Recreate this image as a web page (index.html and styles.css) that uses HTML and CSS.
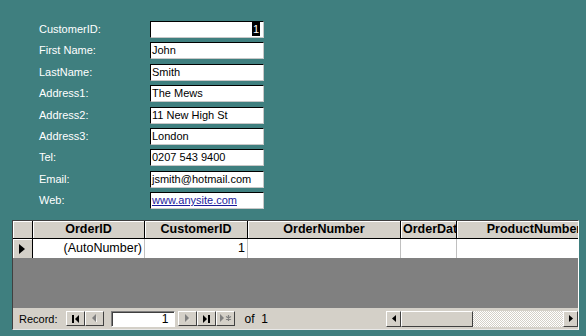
FILE: index.html
```html
<!DOCTYPE html>
<html lang="en">
<head>
  <meta charset="UTF-8">
  <title>Customers</title>
  <link rel="stylesheet" href="styles.css">
</head>
<body>
<!--顾客表单-->
<div class="form">
  <div class="lbl">CustomerID:</div><div class="box num"><span class="hilite">1</span></div>
  <div class="lbl">First Name:</div><div class="box">John</div>
  <div class="lbl">LastName:</div><div class="box">Smith</div>
  <div class="lbl">Address1:</div><div class="box">The Mews</div>
  <div class="lbl">Address2:</div><div class="box">11 New High St</div>
  <div class="lbl">Address3:</div><div class="box">London</div>
  <div class="lbl">Tel:</div><div class="box">0207 543 9400</div>
  <div class="lbl">Email:</div><div class="box">jsmith@hotmail.com</div>
  <div class="lbl">Web:</div><div class="box"><a href="#">www.anysite.com</a></div>
</div>

<!--订单子表-->
<div class="sheet">
  <div class="row head">
    <div class="cell selcol"></div>
    <div class="cell c1">OrderID</div>
    <div class="cell c2">CustomerID</div>
    <div class="cell c3">OrderNumber</div>
    <div class="cell c4 clip">OrderDate</div>
    <div class="cell c5">ProductNumber</div>
  </div>
  <div class="row data">
    <div class="cell selcol">
      <svg width="8" height="10" viewBox="0 0 8 10"><path d="M1 0 L7 5 L1 10 Z" fill="#000"/></svg>
    </div>
    <div class="cell c1 right">(AutoNumber)</div>
    <div class="cell c2 right">1</div>
    <div class="cell c3"></div>
    <div class="cell c4"></div>
    <div class="cell c5"></div>
  </div>
  <div class="empty"></div>
  <div class="nav">
    <span class="rec">Record:</span>
    <span class="btn">
      <svg width="9" height="8" viewBox="0 0 9 8"><rect x="1" y="0" width="2" height="8" fill="#000"/><path d="M8 0 L4 4 L8 8 Z" fill="#000"/></svg>
    </span>
    <span class="btn">
      <svg width="6" height="9" viewBox="0 0 6 9"><path d="M5 0 L1 4 L5 8 Z" fill="#808080"/><path d="M5 8 L6 8 L6 1 Z" fill="#fff"/></svg>
    </span>
    <span class="recnum">1</span>
    <span class="btn">
      <svg width="6" height="9" viewBox="0 0 6 9"><path d="M1 0 L5 4 L1 8 Z" fill="#808080"/><path d="M2 9 L6 5 L6 4.5 Z" fill="#fff"/></svg>
    </span>
    <span class="btn">
      <svg width="9" height="8" viewBox="0 0 9 8"><path d="M1 0 L5 4 L1 8 Z" fill="#000"/><rect x="6" y="0" width="2" height="8" fill="#000"/></svg>
    </span>
    <span class="btn">
      <svg width="13" height="9" viewBox="0 0 13 9"><path d="M1 0 L5 4 L1 8 Z" fill="#808080"/><path d="M9.5 1 V7 M7 2.5 L12 5.5 M12 2.5 L7 5.5" stroke="#808080" stroke-width="1.2"/></svg>
    </span>
    <span class="of">of&nbsp; 1</span>
    <div class="hscroll">
      <span class="sbtn">
        <svg width="4" height="7" viewBox="0 0 4 7"><path d="M4 0 L0 3.5 L4 7 Z" fill="#000"/></svg>
      </span>
      <span class="thumb"></span>
      <span class="track"></span>
      <span class="sbtn">
        <svg width="4" height="7" viewBox="0 0 4 7"><path d="M0 0 L4 3.5 L0 7 Z" fill="#000"/></svg>
      </span>
    </div>
  </div>
</div>
</body>
</html>
```

FILE: styles.css
```css
* {
  padding: 0;
  margin: 0;
  box-sizing: border-box;
}

body {
  background: #3f7f7f;
  font-family: "Liberation Sans", Arial, sans-serif;
  font-size: 11px;
  width: 586px;
  height: 336px;
  overflow: hidden;
}

.form {
  display: grid;
  grid-template-columns: 111px 114px;
  grid-auto-rows: 17px;
  row-gap: 4.375px;
  padding: 21px 0 0 39px;
}

.lbl {
  color: #fff;
  line-height: 17px;
}

.box {
  background: #fff;
  border: 1px solid;
  border-color: #000 #c8c8c8 #c8c8c8 #000;
  line-height: 15px;
  padding-left: 1px;
  color: #000;
  white-space: nowrap;
  overflow: hidden;
}

.box a {
  color: #1a1a9c;
}

.box.num {
  text-align: right;
  padding-right: 3px;
}

.hilite {
  display: inline-block;
  background: #000;
  color: #fff;
  padding: 0 1px;
  line-height: 14px;
}

.sheet {
  margin: 11px 0 0 12px;
  width: 567px;
  border: 1px solid;
  border-color: #404040 #fff #e8e8e8 #404040;
  overflow: hidden;
}

.row {
  display: flex;
  white-space: nowrap;
}

.cell {
  flex: none;
  overflow: hidden;
  font-size: 12.5px;
}

.selcol { width: 20px; }
.c1 { width: 112px; }
.c2 { width: 103px; }
.c3 { width: 153px; }
.c4 { width: 56px; }
.c5 { width: 154px; }

.head .cell {
  height: 18px;
  background: #d4d0c8;
  border-right: 1px solid #000;
  border-bottom: 1px solid #000;
  box-shadow: inset 1px 1px #fff;
  text-align: center;
  font-weight: bold;
  font-size: 12.5px;
  line-height: 17px;
}

.head .cell.clip {
  text-align: left;
  padding-left: 2px;
}

.head .cell.c5 {
  border-right: 0;
}

.data .cell {
  height: 19px;
  background: #fff;
  border-right: 1px solid #c0c0c0;
  line-height: 19px;
  padding: 0 2px;
}

.data .cell.right {
  text-align: right;
}

.data .selcol {
  background: #d4d0c8;
  border-right: 1px solid #000;
  box-shadow: inset 1px 1px #fff;
  display: flex;
  align-items: center;
  padding-left: 5px;
}

.empty {
  height: 50px;
  background: #808080;
}

.nav {
  height: 21px;
  background: #d4d0c8;
  display: flex;
  align-items: center;
}

.rec {
  margin-left: 6px;
  margin-right: 8px;
}

.btn {
  width: 19px;
  height: 15px;
  background: #d4d0c8;
  border: 1px solid;
  border-color: #fff #404040 #404040 #fff;
  display: flex;
  align-items: center;
  justify-content: center;
}

.recnum {
  width: 64px;
  height: 16px;
  margin: 0 3px 0 7px;
  background: #fff;
  border: 1px solid;
  border-color: #808080 #fff #fff #808080;
  box-shadow: inset 1px 1px #404040;
  text-align: right;
  padding-right: 5px;
  line-height: 14px;
  font-size: 12px;
}

.of {
  margin-left: 10px;
  font-size: 12px;
}

.hscroll {
  margin-left: auto;
  width: 192px;
  height: 16px;
  display: flex;
}

.sbtn {
  width: 15px;
  height: 16px;
  background: #d4d0c8;
  border: 1px solid;
  border-color: #fff #404040 #404040 #fff;
  display: flex;
  align-items: center;
  justify-content: center;
  flex: none;
}

.thumb {
  width: 72px;
  background: #d4d0c8;
  border: 1px solid;
  border-color: #fff #404040 #404040 #fff;
  flex: none;
}

.track {
  flex: 1;
  background: repeating-conic-gradient(#fff 0 25%, #d4d0c8 0 50%) 0 0 / 2px 2px;
}
```
